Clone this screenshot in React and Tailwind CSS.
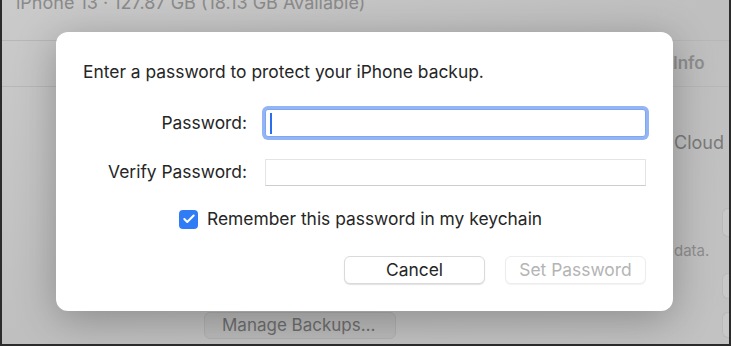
import { Check } from 'lucide-react';

const font = { fontFamily: 'Inter, "Noto Sans", sans-serif' };

const Sliver = ({ className }) => (
  <div className={`ml-[48px] w-[20px] rounded-l-[6px] bg-[#c8c8c8] border border-r-0 border-[#b9b9b9] ${className}`} />
);

export default function App() {
  return (
    <div
      className="relative w-[731px] h-[346px] overflow-hidden bg-gradient-to-br from-[#cacaca] via-[#bfbfbf] to-[#c2c2c2] border-x-[2px] border-b-[2px] border-[#2b2b2b] text-[#262626]"
      style={font}
    >
      {/* window behind the sheet */}
      <div className="flex flex-col h-full">
        <div className="h-[40px] pl-[14px] overflow-hidden">
          <div className="-mt-[8px] text-[18px] leading-[22px] text-[#8a8a8a]">iPhone 13 · 127.87 GB (18.13 GB Available)</div>
        </div>
        <div className="h-px bg-[#b7b7b7]" />
        <div className="h-[45px] flex items-center pl-[671px] text-[17px] font-semibold text-[#8e8e8e]">Info</div>
        <div className="h-px bg-[#b7b7b7]" />
        <div className="flex flex-1">
          <div className="w-[672px] shrink-0 flex flex-col justify-end pb-[5px] pl-[202px]">
            <div className="w-[192px] h-[27px] flex items-center pl-[17px] rounded-[6px] bg-[#bababa] border border-[#b0b0b0] text-[17px] text-[#6e6e6e]">
              Manage Backups…
            </div>
          </div>
          <div className="flex flex-col">
            <div className="mt-[45px] text-[18px] leading-[22px] text-[#7a7a7a]">Cloud</div>
            <Sliver className="mt-[54px] h-[29px]" />
            <div className="mt-[5px] h-[18px] leading-[18px] text-[15px] text-[#8e8e8e]">data.</div>
            <Sliver className="mt-[13px] h-[26px]" />
            <Sliver className="mt-[13px] h-[26px]" />
          </div>
        </div>
      </div>

      {/* password sheet */}
      <div className="absolute left-[54px] top-[32px] w-[617px] h-[279px] rounded-[12px] bg-white shadow-[0_8px_40px_rgba(0,0,0,0.28)] flex flex-col pt-[30px] pl-[27px] pr-[27px] text-[17.4px]">
        <div className="leading-[20px]">Enter a password to protect your iPhone backup.</div>

        <div className="mt-[27px] flex items-center h-[28px]">
          <div className="w-[164px] text-right">Password:</div>
          <div className="ml-[18px] flex-1 h-[28px] rounded-[3px] border border-[#7ea6f2] shadow-[0_0_0_3px_#93b5f6] bg-white flex items-center pl-[4px]">
            <div className="w-[2px] h-[21px] bg-[#2a6ef0]" />
          </div>
        </div>

        <div className="mt-[22px] flex items-center h-[27px]">
          <div className="w-[164px] text-right">Verify Password:</div>
          <div className="ml-[18px] flex-1 h-[27px] border border-[#e4e4e4] border-b-[#cdcdcd] bg-white" />
        </div>

        <div className="mt-[23px] flex items-center h-[20px] pl-[96px]">
          <div className="w-[19px] h-[19px] rounded-[4px] bg-[#2f7cf6] flex items-center justify-center">
            <Check size={14} strokeWidth={3.5} className="text-white" />
          </div>
          <div className="ml-[9px]">Remember this password in my keychain</div>
        </div>

        <div className="mt-[27px] flex justify-end gap-[20px]">
          <div className="w-[141px] h-[28px] rounded-[6px] bg-white border border-[#dadada] shadow-[0_1px_1px_rgba(0,0,0,0.12)] flex items-center justify-center text-[#262626]">
            Cancel
          </div>
          <div className="w-[141px] h-[28px] rounded-[6px] bg-white border border-[#ececec] shadow-[0_1px_1px_rgba(0,0,0,0.05)] flex items-center justify-center text-[#b4b4b4]">
            Set Password
          </div>
        </div>
      </div>
    </div>
  );
}
